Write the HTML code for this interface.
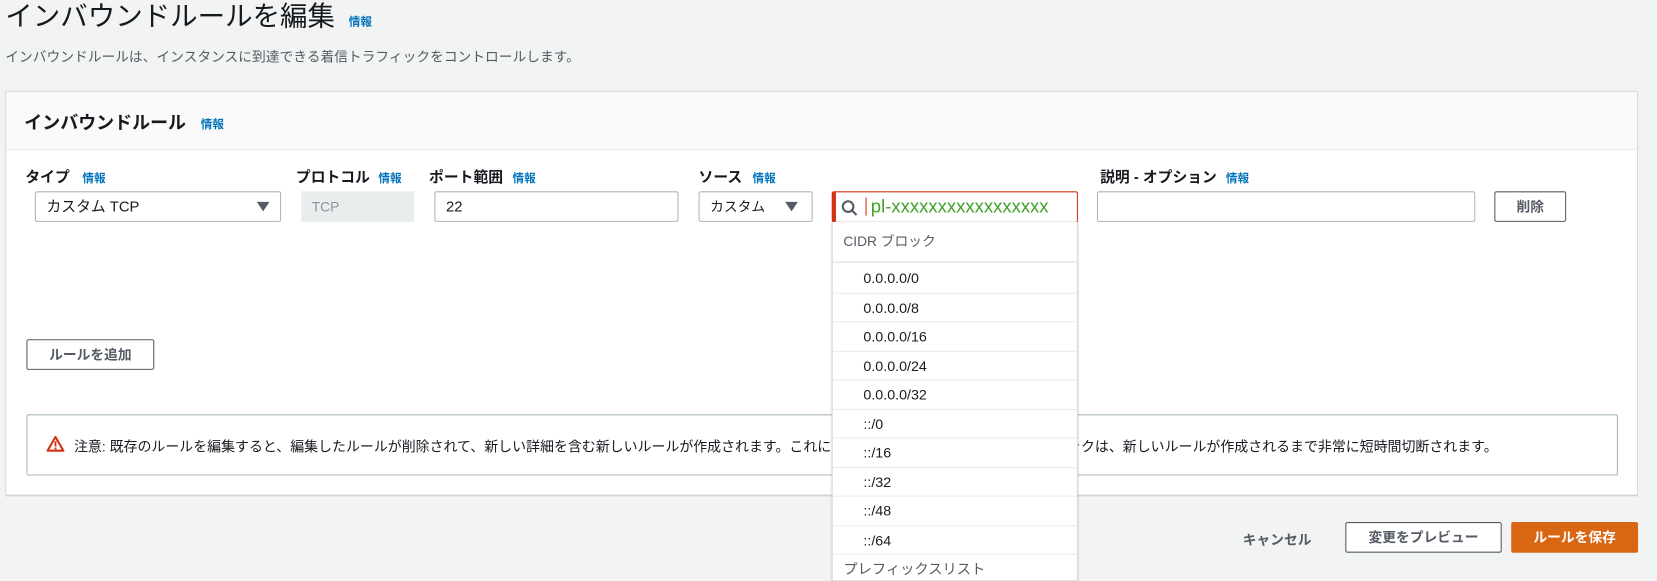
<!DOCTYPE html>
<html><head><meta charset="utf-8"><style>
*{box-sizing:border-box;margin:0;padding:0}
body{width:1657px;height:569px;overflow:hidden;background:#f2f3f3;font-family:"Liberation Sans","Noto Sans CJK JP",sans-serif;color:#16191f;position:relative}
#w{position:absolute;left:0;top:0;width:1568px;height:539px;transform:scale(1.0568);transform-origin:0 0}
.a{position:absolute;white-space:nowrap}
.info{color:#0073bb;font-size:11px;font-weight:bold}
.lbl{font-size:14px;font-weight:bold}
.inp{position:absolute;border:1px solid #aab7b8;background:#fff;height:29px;font-size:14px;padding-left:10px;line-height:27px;border-radius:2px}
.btn{position:absolute;border:1px solid #545b64;background:#fff;font-size:13px;font-weight:bold;color:#545b64;text-align:center;border-radius:2px}
.tri{position:absolute;width:0;height:0;border-left:6px solid transparent;border-right:6px solid transparent;border-top:9px solid #545b64}
.row{position:absolute;left:0;width:231px;height:27.5px;border-bottom:1px solid #eaeded;font-size:13.5px;padding-left:29px;line-height:27px}
</style></head><body><div id="w">
<div class="a" style="left:5px;top:-5px;font-size:26px;color:#16191f">インバウンドルールを編集</div>
<div class="a info" style="left:330px;top:12px">情報</div>
<div class="a" style="left:5px;top:43px;font-size:13px;color:#545b64">インバウンドルールは、インスタンスに到達できる着信トラフィックをコントロールします。</div>

<div class="a" style="left:5px;top:86px;width:1545px;height:383px;background:#fff;border:1px solid #d5dbdb;box-shadow:0 1px 1px rgba(0,28,36,.3)">
 <div style="height:55px;background:#fafafa;border-bottom:1px solid #eaeded"></div>
</div>
<div class="a" style="left:23px;top:102px;font-size:17px;font-weight:bold">インバウンドルール</div>
<div class="a info" style="left:190px;top:109px">情報</div>

<div class="a lbl" style="left:24px;top:157px">タイプ</div><div class="a info" style="left:78px;top:160px">情報</div>
<div class="a lbl" style="left:280px;top:157px">プロトコル</div><div class="a info" style="left:358px;top:160px">情報</div>
<div class="a lbl" style="left:406px;top:157px">ポート範囲</div><div class="a info" style="left:485px;top:160px">情報</div>
<div class="a lbl" style="left:661px;top:157px">ソース</div><div class="a info" style="left:712px;top:160px">情報</div>
<div class="a lbl" style="left:1041px;top:157px">説明 - オプション</div><div class="a info" style="left:1160px;top:160px">情報</div>

<div class="inp" style="left:33px;top:181px;width:233px">カスタム TCP</div><div class="tri" style="left:243px;top:191px"></div>
<div class="a" style="left:285px;top:181px;width:107px;height:29px;background:#eaeded;color:#879596;font-size:13px;line-height:29px;padding-left:10px">TCP</div>
<div class="inp" style="left:411px;top:181px;width:231px">22</div>
<div class="inp" style="left:661px;top:181px;width:108px;font-size:13px">カスタム</div><div class="tri" style="left:743px;top:191px"></div>
<div class="a" style="left:787px;top:181px;width:233px;height:30px;border:1px solid #d13212;border-left:4px solid #d13212;background:#fff;border-radius:2px"></div>
<svg class="a" style="left:796px;top:189px" width="16" height="16" viewBox="0 0 16 16"><circle cx="6.5" cy="6.5" r="5" fill="none" stroke="#545b64" stroke-width="2"/><line x1="10" y1="10" x2="14.5" y2="14.5" stroke="#545b64" stroke-width="2"/></svg>
<div class="a" style="left:819px;top:187px;width:1px;height:17px;background:#d13212"></div>
<div class="a" style="left:824px;top:185px;font-size:17.5px;color:#3fa127">pl-xxxxxxxxxxxxxxxxx</div>
<div class="inp" style="left:1038px;top:181px;width:358px"></div>
<div class="btn" style="left:1414px;top:181px;width:68px;height:29px;line-height:27px">削除</div>

<div class="btn" style="left:25px;top:321px;width:121px;height:29px;line-height:27px">ルールを追加</div>

<div class="a" style="left:25px;top:392px;width:1506px;height:58px;border:1px solid #aab7b8;background:#fff;border-radius:2px"></div>
<svg class="a" style="left:44px;top:412px" width="17" height="16" viewBox="0 0 17 16"><path d="M8.5 1.5L16 14.5H1Z" fill="none" stroke="#d13212" stroke-width="2" stroke-linejoin="round"/><rect x="7.6" y="5.5" width="1.8" height="5" fill="#d13212"/><rect x="7.6" y="11.5" width="1.8" height="1.8" fill="#d13212"/></svg>
<div class="a" style="left:70px;top:412px;font-size:13.2px;color:#16191f">注意: 既存のルールを編集すると、編集したルールが削除されて、新しい詳細を含む新しいルールが作成されます。これにより、そのルールに依存するトラフィックは、新しいルールが作成されるまで非常に短時間切断されます。</div>

<div class="a" style="left:787px;top:210px;width:233px;height:340px;background:#fff;border:1px solid #d5dbdb;border-top:none;box-shadow:0 1px 2px rgba(0,0,0,.2);overflow:hidden">
 <div style="position:absolute;left:0;top:0;width:232px;height:39px;border-bottom:2px solid #eaeded;font-size:13px;color:#545b64;padding-left:10px;line-height:38px">CIDR ブロック</div>
 <div class="row" style="top:40px">0.0.0.0/0</div>
 <div class="row" style="top:67.5px">0.0.0.0/8</div>
 <div class="row" style="top:95px">0.0.0.0/16</div>
 <div class="row" style="top:122.5px">0.0.0.0/24</div>
 <div class="row" style="top:150px">0.0.0.0/32</div>
 <div class="row" style="top:177.5px">::/0</div>
 <div class="row" style="top:205px">::/16</div>
 <div class="row" style="top:232.5px">::/32</div>
 <div class="row" style="top:260px">::/48</div>
 <div class="row" style="top:287.5px">::/64</div>
 <div class="row" style="top:315px;padding-left:10px;color:#545b64">プレフィックスリスト</div>
</div>

<div class="a" style="left:1176px;top:500px;font-size:13px;font-weight:bold;color:#545b64">キャンセル</div>
<div class="btn" style="left:1273px;top:494px;width:148px;height:29px;line-height:27px">変更をプレビュー</div>
<div class="a" style="left:1430px;top:494px;width:120px;height:29px;background:#d86613;border-radius:2px;color:#fff;font-size:13px;font-weight:bold;text-align:center;line-height:29px">ルールを保存</div>
</div></body></html>
